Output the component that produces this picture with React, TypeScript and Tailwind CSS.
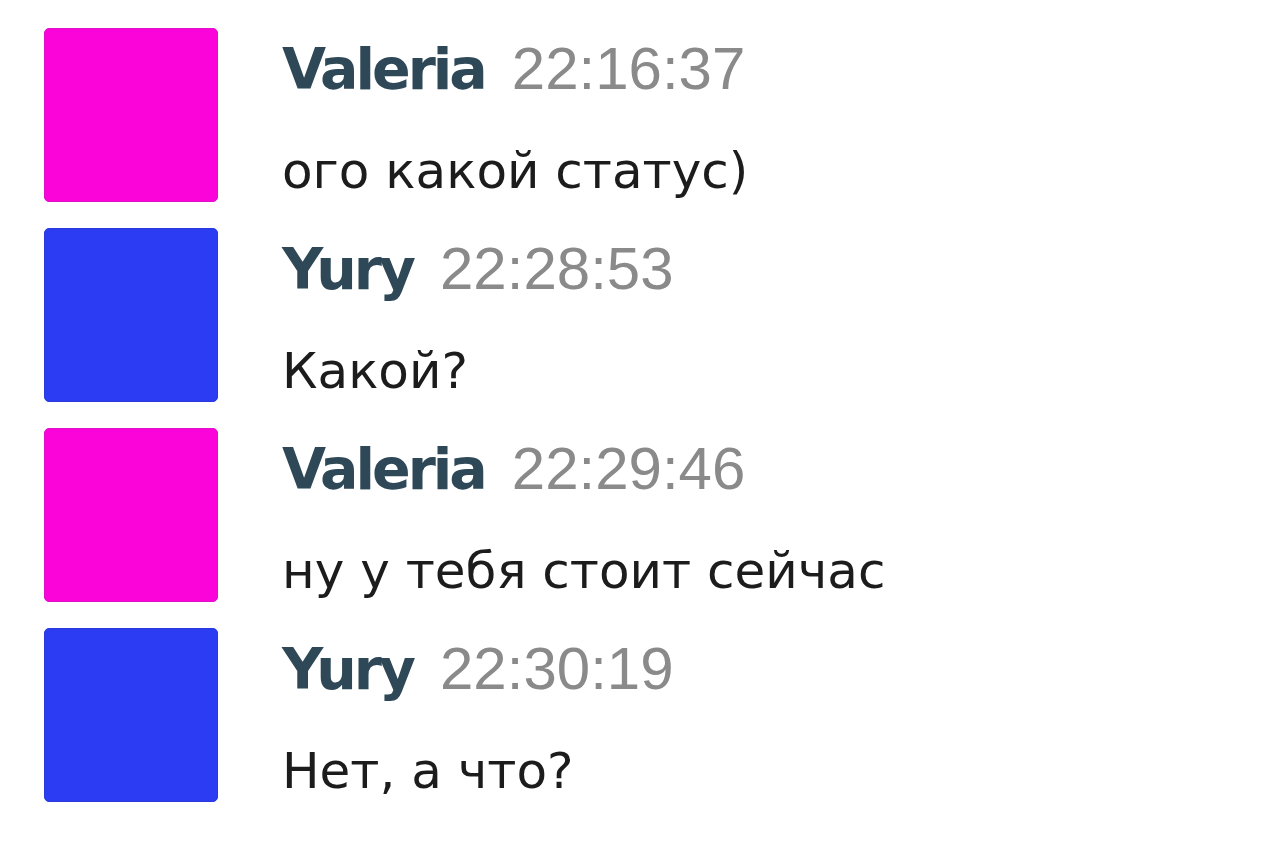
import React from "react";

type Msg = { name: string; time: string; text: string; color: string };

const msgs: Msg[] = [
  { name: "Valeria", time: "22:16:37", text: "ого какой статус)", color: "pink" },
  { name: "Yury", time: "22:28:53", text: "Какой?", color: "blue" },
  { name: "Valeria", time: "22:29:46", text: "ну у тебя стоит сейчас", color: "pink" },
  { name: "Yury", time: "22:30:19", text: "Нет, а что?", color: "blue" },
];

export default function App() {
  return (
    <div className="w-[1280px] h-[848px] bg-white overflow-hidden flex">
      <div className="flex flex-col pt-[28px] pl-[44px]">
        {msgs.map((m, i) => (
          <div key={i} className="flex h-[200px]">
            <div
              className={
                m.color === "pink"
                  ? "w-[174px] h-[174px] rounded-[5px] bg-[#fb04da] border border-[#e010c8]"
                  : "w-[174px] h-[174px] rounded-[5px] bg-[#2b3cf3] border border-[#2a3ad8]"
              }
            />
            <div className="ml-[64px] flex flex-col">
              <div className="mt-[12px] flex items-baseline gap-[27px]">
                <span
                  className="text-[57px] leading-[57px] font-bold tracking-[-3px] text-[#2e4858]"
                  style={{ fontFamily: '"DejaVu Sans", sans-serif' }}
                >
                  {m.name}
                </span>
                <span
                  className="text-[60px] leading-[57px] text-[#8a8a8a]"
                  style={{ fontFamily: '"Liberation Sans", sans-serif' }}
                >
                  {m.time}
                </span>
              </div>
              <div
                className="mt-[48px] text-[50px] leading-[50px] text-[#1c1c1c]"
                style={{ fontFamily: '"DejaVu Sans", sans-serif' }}
              >
                {m.text}
              </div>
            </div>
          </div>
        ))}
      </div>
    </div>
  );
}
